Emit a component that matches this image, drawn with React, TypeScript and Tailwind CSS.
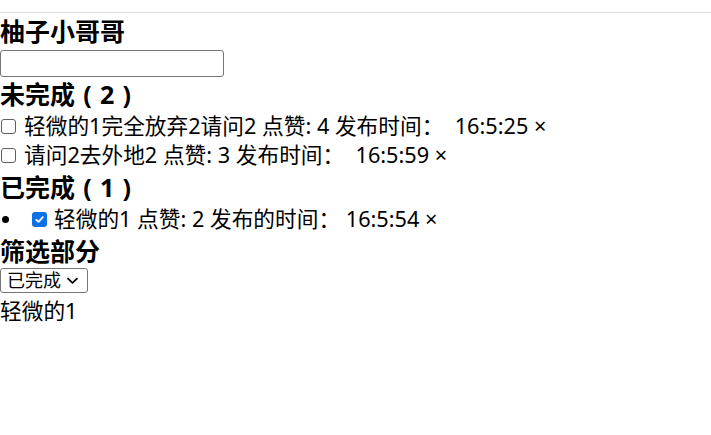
import React, { useState } from 'react'

type Todo = { id: number; title: string; likes: number; time: string; done: boolean }

const font = "font-['Noto_Sans','Noto_Sans_CJK_SC',sans-serif]"

const Box = ({ checked }: { checked: boolean }) =>
  checked ? (
    <span className="flex h-[15px] w-[15px] shrink-0 items-center justify-center rounded-[3px] bg-[#0b70e6]">
      <svg viewBox="0 0 12 12" className="h-[11px] w-[11px]">
        <path d="M2.5 6.3 5 8.6 9.6 3.4" fill="none" stroke="white" strokeWidth="1.9" strokeLinecap="round" strokeLinejoin="round" />
      </svg>
    </span>
  ) : (
    <span className="block h-[15px] w-[15px] shrink-0 rounded-[3px] border border-[#5f5f5f] bg-white" />
  )

// YaHei centres full-width brackets in their box, so do the same here
const Count = ({ n }: { n: number }) => (
  <>
    <span className="inline-block w-[25px] text-center">(</span>
    {n}
    <span className="inline-block w-[25px] text-center">)</span>
  </>
)

const App = () => {
  const [todos] = useState<Todo[]>([
    { id: 1, title: '轻微的1完全放弃2请问2', likes: 4, time: '16:5:25', done: false },
    { id: 2, title: '请问2去外地2', likes: 3, time: '16:5:59', done: false },
    { id: 3, title: '轻微的1', likes: 2, time: '16:5:54', done: true },
  ])
  const [name, setName] = useState('')
  const [filter, setFilter] = useState('done')

  const undone = todos.filter(t => !t.done)
  const done = todos.filter(t => t.done)

  return (
    <div className={`min-h-screen bg-white text-[21.7px] text-black ${font}`}>
      <div className="h-[13px] border-b border-[#dcdcdc]" />

      <h3 className="text-[25px] font-bold leading-[37px]">柚子小哥哥</h3>
      <input
        value={name}
        onChange={e => setName(e.target.value)}
        className="block h-[27px] w-[224px] rounded-[3px] border border-[#767676] px-1 text-[18px] outline-none"
      />

      <h3 className="text-[25px] font-bold leading-[35px]">未完成<Count n={undone.length} /></h3>
      {undone.map(t => (
        <div key={t.id} className="flex h-[29px] items-center whitespace-pre">
          <span className="ml-[1px] mr-[8px]"><Box checked={false} /></span>
          <span>{t.title} 点赞: {t.likes} 发布时间：  {t.time} ×</span>
        </div>
      ))}

      <h3 className="text-[25px] font-bold leading-[34px]">已完成<Count n={done.length} /></h3>
      <ul>
        {done.map(t => (
          <li key={t.id} className="flex h-[30px] items-center whitespace-pre">
            <span className="ml-[2px] mr-[23px] h-[7px] w-[7px] rounded-full bg-black" />
            <span className="mr-[7px]"><Box checked={true} /></span>
            <span>{t.title} 点赞: {t.likes} 发布的时间： {t.time} ×</span>
          </li>
        ))}
      </ul>

      <h3 className="text-[25px] font-bold leading-[34px]">筛选部分</h3>
      <div className="relative h-[25px] w-[88px]">
        <select
          value={filter}
          onChange={e => setFilter(e.target.value)}
          className="block h-[25px] w-[88px] appearance-none rounded-[3px] border border-[#767676] bg-white pl-[6px] text-[18px] leading-[23px] outline-none"
        >
          <option value="all">全部</option>
          <option value="undone">未完成</option>
          <option value="done">已完成</option>
        </select>
        <svg viewBox="0 0 13 7" className="pointer-events-none absolute right-[9px] top-[9px] h-[7px] w-[13px]">
          <path d="M1.5 1.2 6.5 5.8 11.5 1.2" fill="none" stroke="black" strokeWidth="1.8" />
        </svg>
      </div>
      <div className="leading-[35px]">轻微的1</div>
    </div>
  )
}

export default App
